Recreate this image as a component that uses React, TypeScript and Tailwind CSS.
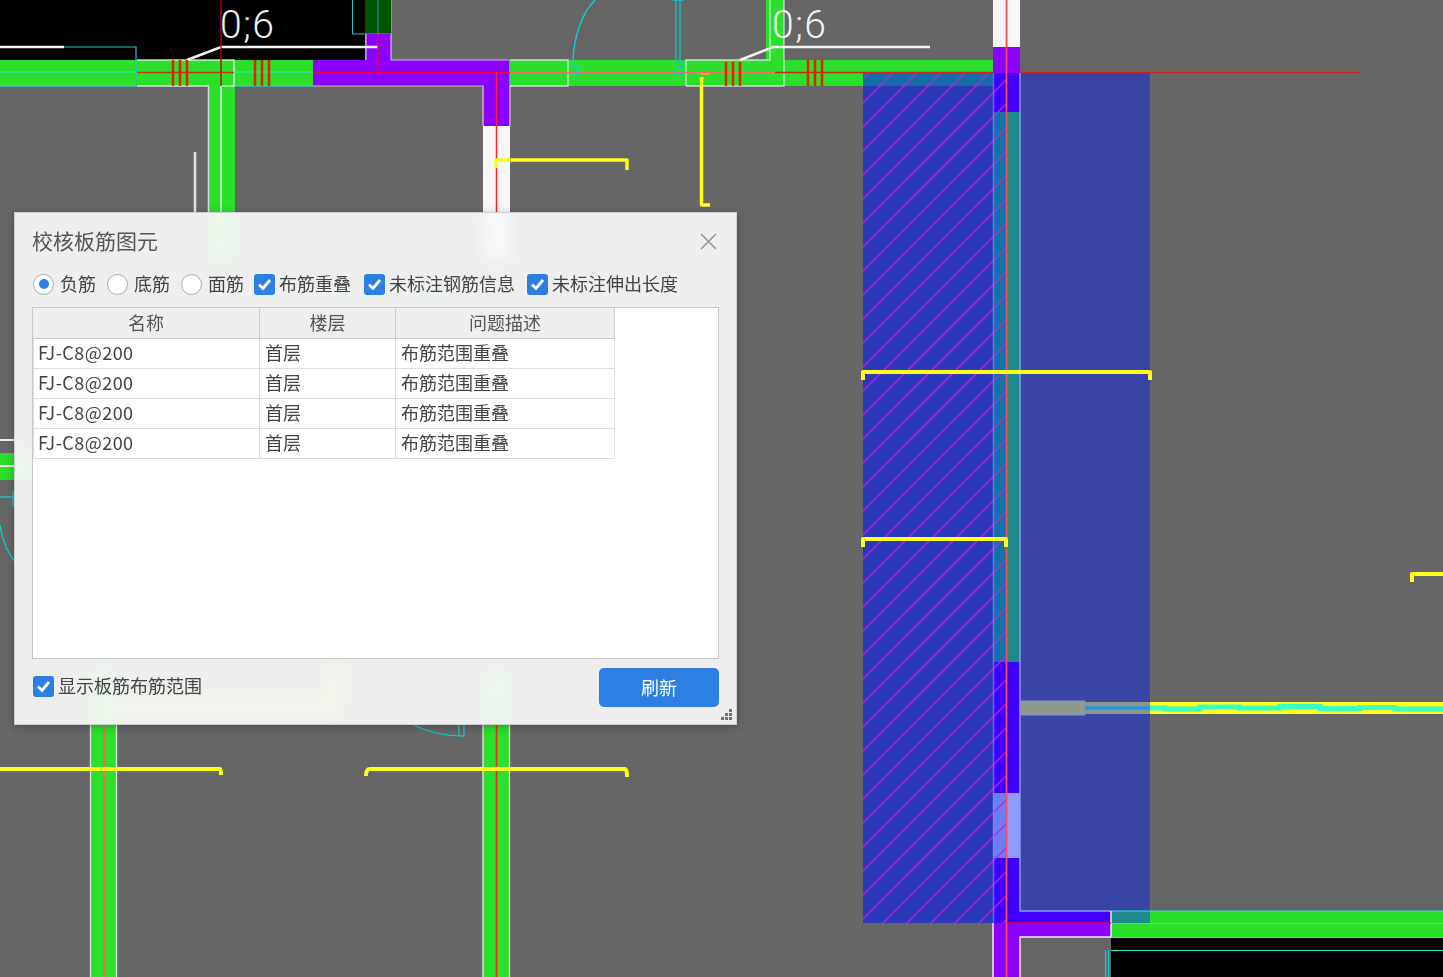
const rows = ["0", "1", "2", "3"];
const hatch = Array.from({ length: 46 }, (_, i) => 966 + i * 24 - 96);

function CadDrawing() {
  return (
    <svg className="absolute left-0 top-0" width="1443" height="977" viewBox="0 0 1443 977" fill="none">
      <defs>
        <clipPath id="hatchClip">
          <rect x="863" y="73" width="143" height="850" />
        </clipPath>
      </defs>

      {/* top left room */}
      <rect x="0" y="0" width="365" height="60" fill="#000" />
      <rect x="365" y="0" width="26" height="34" fill="#005400" />
      <rect x="352.500" y="-2" width="39" height="36" stroke="#17c8d0" strokeWidth="1" />
      <line x1="378" y1="0" x2="378" y2="34" stroke="#22a0a0" />
      <rect x="366" y="34" width="25" height="30" fill="#8b00ff" />
      <rect x="0" y="60" width="313" height="26" fill="#2bdf2b" />
      <rect x="313" y="60" width="197" height="26" fill="#8b00ff" />
      <rect x="484" y="86" width="25" height="40" fill="#8b00ff" />
      <rect x="483" y="126" width="27" height="134" fill="#f7f7f7" />
      <rect x="209" y="86" width="26" height="174" fill="#2bdf2b" />
      <path d="M0 72H137M235 72H313M0 86H137M235 86H313" stroke="#22e8e0" strokeWidth="1.200" />
      <path d="M64 47H136V86" stroke="#17c8d0" strokeWidth="1.200" />
      <path d="M0 47H64" stroke="#f2f2f2" strokeWidth="2.500" />
      <path d="M137 60H234V86H221V216M208.500 216V86H137" stroke="#eeeeee" strokeWidth="1.500" strokeOpacity="0.85" />
      <path d="M313 86H483V126M391 34V60H509M366 60V34M510 60V126" stroke="#e8e8e8" strokeWidth="1.200" strokeOpacity="0.75" />
      <path d="M187 60L221 47H378" stroke="#f4f4f4" strokeWidth="2.500" />
      <path d="M195 152V212" stroke="#e4e4e4" strokeWidth="2.500" />
      <path d="M221 0V86" stroke="#b8000c" strokeWidth="1.300" />
      <path d="M137 72.500H234" stroke="#c8321c" strokeWidth="1.500" />
      <path d="M313 72.500H510M378 34V72" stroke="#e8003c" strokeWidth="1.300" />
      <path d="M496.500 72V216" stroke="#ff2020" strokeWidth="1.500" />
      <path d="M173 60V86M180 60V86M187 60V86M255 60V86M262 60V86M269 60V86" stroke="#f41a00" strokeWidth="2.500" />

      {/* tints that show through the dialog */}
      <rect x="240" y="296" width="250" height="8" fill="#2bdf2b" fillOpacity="0.7" />
      <path d="M120 706H335V662" stroke="#ffff1e" strokeWidth="12" strokeOpacity="0.7" />
      <path d="M460 716V680" stroke="#17c8d0" strokeWidth="12" strokeOpacity="0.35" />

      {/* second room top */}
      <rect x="510" y="60" width="483" height="26" fill="#2bdf2b" />
      <rect x="766" y="0" width="18" height="60" fill="#2bdf2b" />
      <path d="M510 60H568V86H510M686 86V60H770V0M784 0V86H686" stroke="#e6e6e6" strokeWidth="1.300" strokeOpacity="0.85" />
      <path d="M510 72.500H775" stroke="#f56a6a" strokeWidth="1.500" />
      <path d="M775 72.500H1360" stroke="#d0201c" strokeWidth="1.500" />
      <path d="M726 62V86M733 62V86M740 62V86M808 60V86M815 60V86M822 60V86" stroke="#f41a00" strokeWidth="2.500" />
      <path d="M740 60L773 47H930" stroke="#f4f4f4" strokeWidth="2.500" />
      <path d="M595 0C581 14 574 38 573 60V66H579V74H571" stroke="#17d0d8" strokeWidth="1.300" />
      <path d="M676 0V62H683M680 0V62M672 0H684M676 66H683V74H674V70" stroke="#17c0c8" strokeWidth="1.300" />
      <path d="M701 74H710" stroke="#f0a020" strokeWidth="2" />
      <path d="M701.500 77V205H710" stroke="#ffff1e" strokeWidth="3.500" strokeLinejoin="round" />
      <path d="M496 168V160H627V170" stroke="#ffff1e" strokeWidth="3.500" strokeLinejoin="round" />
      <text x="220" y="38" fill="#f2f2f2" fontFamily="Roboto, sans-serif" fontWeight="300" fontSize="39" textLength="54">0;6</text>
      <text x="772" y="38" fill="#f2f2f2" fontFamily="Roboto, sans-serif" fontWeight="300" fontSize="39" textLength="54">0;6</text>

      {/* vertical wall and overlay */}
      <rect x="993" y="0" width="27" height="47" fill="#f7f7f7" />
      <rect x="993" y="47" width="27" height="26" fill="#8b00ff" />
      <rect x="863" y="73" width="287" height="850" fill="#3a44a5" />
      <rect x="863" y="73" width="130" height="850" fill="#2b38b8" />
      <rect x="863" y="73" width="130" height="13" fill="#166ca4" />
      <rect x="993" y="73" width="13" height="39" fill="#3f00ff" />
      <rect x="1006" y="73" width="14" height="39" fill="#4400ff" />
      <rect x="993" y="112" width="13" height="550" fill="#1370a8" />
      <rect x="1006" y="112" width="14" height="550" fill="#1c8a8c" />
      <rect x="993" y="662" width="27" height="131" fill="#3f00ff" />
      <rect x="993" y="793" width="13" height="65" fill="#6d7dff" />
      <rect x="1006" y="793" width="14" height="65" fill="#8f9bff" />
      <rect x="993" y="858" width="27" height="65" fill="#3f00ff" />
      <rect x="1020" y="911" width="91" height="12" fill="#4400ff" />
      <rect x="1111" y="911" width="39" height="12" fill="#1c8a8c" />
      <g clipPath="url(#hatchClip)">
        {hatch.map((s) => (
          <line key={s} x1={863} y1={s - 863} x2={1006} y2={s - 1006} stroke="#c41fe0" strokeWidth="1.300" />
        ))}
      </g>
      <path d="M993.500 73V923" stroke="#7a88f4" strokeWidth="1.500" strokeOpacity="0.7" />
      <path d="M1020 73V911H1111" stroke="#8f96f0" strokeWidth="1.500" />

      {/* bottom right */}
      <rect x="993" y="923" width="27" height="54" fill="#8b00ff" />
      <rect x="1020" y="923" width="91" height="14" fill="#8b00ff" />
      <rect x="1150" y="911" width="293" height="26" fill="#2bdf2b" />
      <rect x="1111" y="923" width="39" height="14" fill="#2bdf2b" />
      <rect x="1111" y="938" width="332" height="39" fill="#000" />
      <path d="M1111 911H1443M1111 923.500H1443M1111 937.500H1443M1111 950.500H1443" stroke="#22e8d8" strokeWidth="1.200" />
      <path d="M1105.500 950V977M1108.500 950V977" stroke="#17c8d0" strokeWidth="1.200" />
      <path d="M1111 911V937H1020V977M993 923V977" stroke="#eeeeee" strokeWidth="1.500" />
      <path d="M1006 923H1111" stroke="#d00030" strokeWidth="1.500" />
      <path d="M1006.500 0V977" stroke="#ff4a4a" strokeWidth="1.800" />

      {/* beam */}
      <rect x="1020" y="701" width="65" height="14" fill="#8f9a8c" stroke="#8088e0" />
      <rect x="1085" y="702" width="65" height="12" fill="#8c948c" />
      <rect x="1085" y="706.500" width="65" height="3" fill="#0f9af0" />
      <rect x="1150" y="702" width="293" height="12" fill="#ffff1e" />
      <path d="M1150 708H1165V709H1200V707H1240V708H1280V706.500H1320V708.500H1360V707.500H1395V709H1443" stroke="#38ffc4" strokeWidth="5" />

      {/* yellow marks on overlay */}
      <path d="M863 380V372H1150V380" stroke="#ffff1e" strokeWidth="4" strokeLinejoin="round" />
      <path d="M863 547V539H1006V547" stroke="#ffff1e" strokeWidth="4" strokeLinejoin="round" />
      <path d="M1443 574H1412V582" stroke="#ffff1e" strokeWidth="4" strokeLinejoin="round" />

      {/* lower walls */}
      <rect x="90" y="670" width="27" height="307" fill="#2bdf2b" />
      <rect x="483" y="670" width="27" height="307" fill="#2bdf2b" />
      <path d="M90.500 670V977M116.500 670V977M483 670V977M509.500 670V977" stroke="#e6e6e6" strokeWidth="1.300" />
      <path d="M104 700V977" stroke="#f26a50" strokeWidth="2" />
      <path d="M496.500 700V977" stroke="#ff1c1c" strokeWidth="1.500" />
      <path d="M0 769H220Q221 769 221 775" stroke="#ffff1e" strokeWidth="4" />
      <path d="M366 776Q366 769 370 769H625Q627 769 627 777" stroke="#ffff1e" strokeWidth="4" />
      <path d="M408 722C424 731 444 736 464 736V715M459 736V715" stroke="#17c8d0" strokeWidth="1.300" />

      {/* behind the left side of the dialog */}
      <rect x="0" y="453" width="30" height="27" fill="#2bdf2b" />
      <path d="M0 440H30M0 466H30" stroke="#eeeeee" strokeWidth="2" />
      <path d="M0 497H30M13 491V507" stroke="#17c8d0" strokeWidth="1.300" />
      <path d="M0 525C2 540 8 554 18 566" stroke="#17c8d0" strokeWidth="1.300" />
    </svg>
  );
}

function Radio({ checked, label, className }: { checked?: boolean; label: string; className?: string }) {
  return (
    <label className={`flex items-center gap-[6px] ${className ?? ""}`}>
      <span className="flex h-[21px] w-[21px] items-center justify-center rounded-full border border-[#aaaaaa] bg-white">
        {checked ? <span className="h-[10px] w-[10px] rounded-full bg-[#2d7fe3]" /> : null}
      </span>
      <span className="pb-[2px]">{label}</span>
    </label>
  );
}

function Check({ label, className }: { label: string; className?: string }) {
  return (
    <label className={`flex items-center gap-[4px] ${className ?? ""}`}>
      <span className="flex h-[21px] w-[21px] items-center justify-center rounded-[3px] bg-[#2d7fe3]">
        <svg width="15" height="13" viewBox="0 0 15 13" fill="none">
          <path d="M2 6.500L6 10.500L13 2" stroke="#fff" strokeWidth="2.800" />
        </svg>
      </span>
      <span className="pb-[2px]">{label}</span>
    </label>
  );
}

export default function App() {
  return (
    <div className="relative h-[977px] w-[1443px] overflow-hidden bg-[#666666] font-['Noto_Sans_CJK_SC','Noto_Sans',sans-serif] text-[18px] text-[#444444] blur-[0.5px]">
      <CadDrawing />

      <div className="absolute left-[14px] top-[212px] flex h-[513px] w-[723px] flex-col border border-[#cfcfcf] bg-[#fafafa]/[0.92] px-[17px] shadow-[0_2px_8px_rgba(0,0,0,0.25)] backdrop-blur-sm">
        <div className="flex h-[58px] shrink-0 items-center justify-between">
          <h2 className="pb-[2px] text-[21px] font-normal text-[#555555]">校核板筋图元</h2>
          <button type="button" className="mb-[2px] mr-[1px] text-[#999999]">
            <svg width="19" height="19" viewBox="0 0 19 19" fill="none">
              <path d="M2 2L17 17M17 2L2 17" stroke="currentColor" strokeWidth="1.700" />
            </svg>
          </button>
        </div>

        <div className="mb-[10px] flex h-[26px] shrink-0 items-center pl-[1px]">
          <Radio checked label="负筋" />
          <Radio className="ml-[11px]" label="底筋" />
          <Radio className="ml-[11px]" label="面筋" />
          <Check className="ml-[10px]" label="布筋重叠" />
          <Check className="ml-[13px]" label="未标注钢筋信息" />
          <Check className="ml-[12px]" label="未标注伸出长度" />
        </div>

        <div className="h-[352px] shrink-0 border border-[#c8c8c8] bg-white">
          <div className="grid w-[582px] grid-cols-[227px_136px_219px] border-b border-[#cccccc] bg-[#eeeeee] text-center text-[#555555]">
            <div className="h-[30px] border-r border-[#cccccc] leading-[29px]">名称</div>
            <div className="h-[30px] border-r border-[#cccccc] leading-[29px]">楼层</div>
            <div className="h-[30px] border-r border-[#cccccc] leading-[29px]">问题描述</div>
          </div>
          {rows.map((r) => (
            <div key={r} className="grid w-[582px] grid-cols-[227px_136px_219px] border-b border-[#dddddd]">
              <div className="h-[29px] border-x border-[#dddddd] pl-[4px] leading-[27px] tracking-[0.45px]">FJ-C8@200</div>
              <div className="h-[29px] border-r border-[#dddddd] pl-[5px] leading-[27px]">首层</div>
              <div className="h-[29px] border-r border-[#dddddd] pl-[5px] leading-[27px]">布筋范围重叠</div>
            </div>
          ))}
        </div>

        <div className="flex flex-1 items-start justify-between pl-[1px] pt-[9px]">
          <Check className="h-[36px]" label="显示板筋布筋范围" />
          <button type="button" className="h-[39px] w-[120px] rounded-[5px] bg-[#2d7fe3] text-white">刷新</button>
        </div>

        <svg className="absolute bottom-[3px] right-[3px]" width="13" height="13" viewBox="0 0 13 13" fill="#6f7377">
          <rect x="9" y="1" width="3" height="3" />
          <rect x="5" y="5" width="3" height="3" />
          <rect x="9" y="5" width="3" height="3" />
          <rect x="1" y="9" width="3" height="3" />
          <rect x="5" y="9" width="3" height="3" />
          <rect x="9" y="9" width="3" height="3" />
        </svg>
      </div>
    </div>
  );
}
